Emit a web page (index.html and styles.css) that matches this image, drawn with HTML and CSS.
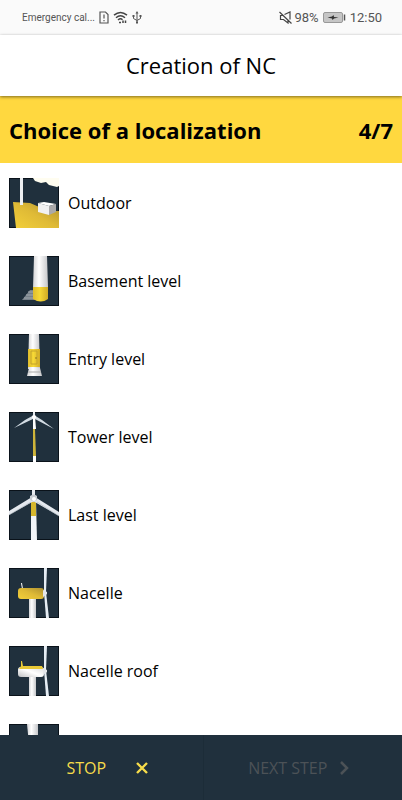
FILE: index.html
```html
<!DOCTYPE html>
<html lang="en">

<head>
    <meta charset="UTF-8">
    <meta name="viewport" content="width=device-width, initial-scale=1">
    <title>Creation of NC</title>
    <link rel="stylesheet" href="styles.css">
</head>

<body>
    <!-- shared gradients -->
    <svg class="defs" width="0" height="0" aria-hidden="true">
        <defs>
            <linearGradient id="tube">
                <stop offset="0" stop-color="#d4d4d6" />
                <stop offset="0.4" stop-color="#ffffff" />
                <stop offset="1" stop-color="#c6c7ca" />
            </linearGradient>
            <linearGradient id="gold">
                <stop offset="0" stop-color="#e0bd2c" />
                <stop offset="0.45" stop-color="#f7d936" />
                <stop offset="1" stop-color="#d0aa25" />
            </linearGradient>
            <linearGradient id="ground" x1="0" y1="1" x2="1" y2="0">
                <stop offset="0" stop-color="#f3d03a" />
                <stop offset="0.5" stop-color="#dfba36" />
                <stop offset="1" stop-color="#ad9030" />
            </linearGradient>
            <linearGradient id="shell" x1="0" y1="1" x2="1" y2="0">
                <stop offset="0" stop-color="#bfc0c2" />
                <stop offset="0.5" stop-color="#ffffff" />
                <stop offset="1" stop-color="#d9dadc" />
            </linearGradient>
        </defs>
    </svg>

    <div class="status-bar">
        <div class="status-group">
            <span class="carrier">Emergency cal...</span>
            <svg width="10" height="13" viewBox="0 0 10 13" fill="none" stroke="#555" stroke-width="1.2">
                <path d="M1 1h5.5L9 3.5V12H1z" />
                <path d="M5 3.5v4M5 9v1.3" />
            </svg>
            <svg width="15" height="13" viewBox="0 0 15 13" fill="none" stroke="#444" stroke-width="1.5">
                <path d="M1 4.2Q7.5-1.2 14 4.2M3 6.7Q7.5 2.8 12 6.7M5 9Q7.5 6.8 9.5 8.7" />
                <path d="M6 11.5h2M10 9.5V12M12.5 9.5V12" />
            </svg>
            <svg width="10" height="13" viewBox="0 0 10 13" fill="none" stroke="#555">
                <path d="M5 2v9M1.5 5v2.5L5 9.5l3.5-2V5" />
                <path d="M5 0l1.5 2.5h-3zM.5 4h2v2h-2zM7.5 4h2v2h-2zM4 10.5h2v2H4z" fill="#555" stroke="none" />
            </svg>
        </div>
        <div class="status-group status-right">
            <svg width="13" height="13" viewBox="0 0 13 13" fill="none" stroke="#444" stroke-width="1.2">
                <path d="M4 4.5H1.5v4h3L9 12V9.5M5.500 3.500L11 1v7.500M.5 1l12 11.500" />
            </svg>
            <span>98%</span>
            <svg class="battery" width="23" height="11" viewBox="0 0 23 11">
                <rect x=".5" y=".5" width="19" height="10" rx="1.5" fill="#c6c6c6" stroke="#999" />
                <path d="M4.5 5.5L9 4.5 10.5 3l.5 2 4.5.5-4.5 1L9.500 8 9 6.500z" fill="#333" />
                <path d="M21.5 2.5v6" stroke="#555" stroke-width="1.5" />
            </svg>
            <span>12:50</span>
        </div>
    </div>

    <header class="app-bar">
        <h1>Creation of NC</h1>
    </header>

    <div class="step-banner">
        <h2>Choice of a localization</h2>
        <span>4/7</span>
    </div>

    <ul class="locations">
        <li>
            <button class="location">
                <svg class="thumb" viewBox="0 0 50 50">
                    <path d="M24 0l2 3 6 2 5-1 3 3 8 2 2-1V0z" fill="#fffdf0" />
                    <path d="M4 24l17 1 7 3 11 5 11 0v17H7z" fill="url(#ground)" />
                    <path d="M11 0h3v27h-3z" fill="#eef0f3" />
                    <path d="M29 25l6-1 12 2-7 2z" fill="#fff" />
                    <path d="M29 25l11 3v9l-11-3z" fill="#f1f1f1" />
                    <path d="M40 28l7-2v8l-7 3z" fill="#aaa9aa" />
                </svg>
                Outdoor
            </button>
        </li>
        <li>
            <button class="location">
                <svg class="thumb" viewBox="0 0 50 50">
                    <path d="M13 44l8-10h5v10z" fill="#77818a" />
                    <path d="M19 36h6M17 39h8M15 42h10" stroke="#a0a6ac" />
                    <path d="M25 0h13l1 32H24z" fill="url(#tube)" />
                    <path d="M24 31h15v12q-7 5-15 0z" fill="url(#gold)" />
                </svg>
                Basement level
            </button>
        </li>
        <li>
            <button class="location">
                <svg class="thumb" viewBox="0 0 50 50">
                    <path d="M20 0h10l1 35H19z" fill="url(#tube)" />
                    <path d="M19 15h12v18H19z" fill="url(#gold)" />
                    <path d="M22 17h6v13h-6z" fill="none" stroke="#c4a32c" />
                    <path d="M27 23v2" stroke="#8a7426" />
                    <path d="M20 34h11l1 4 1 4H18l1-4z" fill="url(#tube)" />
                    <path d="M19 38h13" stroke="#aaa" />
                </svg>
                Entry level
            </button>
        </li>
        <li>
            <button class="location">
                <svg class="thumb" viewBox="0 0 50 50">
                    <path d="M24 0h2v5h-2z" fill="#e8ebef" />
                    <path d="M24 4h2l1 13h-3z" fill="#fff" />
                    <path d="M25 3l1 3L5 16l11-8zM25 3l-1 3 21 11-12-9z" fill="#d3dce4" />
                    <path d="M24 17h2l1 27h-3z" fill="#ceb43a" />
                    <path d="M24 44h3v6h-3z" fill="#fff" />
                    <circle cx="25" cy="5" r="2" fill="#fff" />
                </svg>
                Tower level
            </button>
        </li>
        <li>
            <button class="location">
                <svg class="thumb" viewBox="0 0 50 50">
                    <path d="M23 0h3v9h-3z" fill="#e8ebef" />
                    <path d="M22 11h5l1 39h-6z" fill="#f2f5f9" />
                    <path d="M22 12h5v14h-5z" fill="#d6b72d" />
                    <path d="M23 7l2 4L0 25v-4zM26 7l-2 4 26 15v-4z" fill="#e4e8ee" />
                    <path d="M0 25l22-13M28 12l22 14" stroke="#aeb8c0" stroke-width=".6" />
                    <path d="M21 6q4-3 7 0v4l-3 2-4-2z" fill="#c9cdd1" />
                    <circle cx="25" cy="9" r="2" fill="#fff" />
                </svg>
                Last level
            </button>
        </li>
        <li>
            <button class="location">
                <svg class="thumb" viewBox="0 0 50 50">
                    <path d="M20 28h7v22h-7z" fill="url(#tube)" />
                    <path d="M35 0h3l-1 24h-2z" fill="#e6edf4" />
                    <path d="M35 24h2l3 26h-3z" fill="#e6edf4" />
                    <path d="M12 15h1l1 6h-1z" fill="#fff" />
                    <rect x="9" y="20" width="26" height="11" rx="3" fill="url(#ground)" />
                    <path d="M34 22l4 2v2l-4 3z" fill="#e4e6ea" />
                </svg>
                Nacelle
            </button>
        </li>
        <li>
            <button class="location">
                <svg class="thumb" viewBox="0 0 50 50">
                    <path d="M20 28h7v22h-7z" fill="url(#tube)" />
                    <path d="M35 0h3l-1 24h-2z" fill="#e6edf4" />
                    <path d="M35 24h2l3 26h-3z" fill="#e6edf4" />
                    <rect x="9" y="21" width="26" height="10" rx="3" fill="url(#shell)" />
                    <path d="M12 15h1l1 5h19l1 3H10l2-3z" fill="#e9c936" />
                    <path d="M34 22l4 2v2l-4 3z" fill="#e4e6ea" />
                </svg>
                Nacelle roof
            </button>
        </li>
        <li>
            <button class="location" aria-label="Blade">
                <svg class="thumb" viewBox="0 0 50 50">
                    <path d="M18 0h11v50h-6z" fill="url(#tube)" />
                </svg>
            </button>
        </li>
    </ul>

    <footer class="actions">
        <button class="action stop">
            STOP
            <svg width="12" height="12" viewBox="0 0 12 12" fill="none" stroke="currentColor" stroke-width="2.4">
                <path d="M1 1l10 10M11 1L1 11" />
            </svg>
        </button>
        <button class="action next" disabled>
            NEXT STEP
            <svg width="9" height="14" viewBox="0 0 9 14" fill="none" stroke="currentColor" stroke-width="2.5">
                <path d="M1 1l6 6-6 6" />
            </svg>
        </button>
    </footer>
</body>

</html>
```
FILE: styles.css
```css
* {
    box-sizing: border-box;
}

body {
    margin: 0;
    height: 100vh;
    display: flex;
    flex-direction: column;
    font-family: "Open Sans", "Noto Sans", sans-serif;
    color: #000;
    background: #fff;
}

button {
    border: none;
    background: none;
    padding: 0;
    font: inherit;
    color: inherit;
    cursor: pointer;
}

svg {
    flex: none;
}

.defs {
    position: absolute;
}

.status-bar {
    flex: none;
    height: 35px;
    padding: 0 20px 0 22px;
    display: flex;
    align-items: center;
    justify-content: space-between;
    background: #fafafa;
    font-family: Roboto, sans-serif;
    color: #555;
}

.status-group {
    display: flex;
    align-items: center;
    gap: 4px;
}

.carrier {
    font-size: 10px;
}

.status-right {
    gap: 2px;
    font-size: 13px;
}

.battery {
    margin: 0 2px;
}

.app-bar {
    flex: none;
    height: 61px;
    padding-bottom: 2px;
    display: flex;
    align-items: center;
    justify-content: center;
    box-shadow: 0 1px 3px rgba(0, 0, 0, 0.5);
    z-index: 1;
}

.app-bar h1 {
    margin: 0;
    font-size: 22px;
    font-weight: 400;
}

.step-banner {
    flex: none;
    height: 67px;
    padding: 0 9px;
    display: flex;
    align-items: center;
    justify-content: space-between;
    background: #ffd83f;
    font-size: 22px;
    font-weight: 700;
}

.step-banner h2 {
    margin: 0;
    font-size: inherit;
}

.locations {
    flex: 1;
    min-height: 0;
    margin: 0;
    padding: 15px 9px 0;
    display: flex;
    flex-direction: column;
    gap: 28px;
    list-style: none;
    overflow-y: auto;
    scrollbar-width: none;
}

.location {
    width: 100%;
    display: flex;
    align-items: center;
    gap: 9px;
    font-size: 16px;
    text-align: left;
}

.thumb {
    width: 50px;
    height: 50px;
    background: #20303d;
    box-shadow: inset 0 0 0 1px #0a121a;
}

.actions {
    flex: none;
    height: 65px;
    display: flex;
    background: #20303d;
}

.action {
    flex: 1;
    display: flex;
    align-items: center;
    justify-content: center;
    font-size: 16px;
}

.stop {
    gap: 30px;
    padding-left: 12px;
    color: #f7dc4a;
    border-right: 1px solid #1c2c38;
}

.next {
    gap: 13px;
    padding-right: 8px;
    color: #4c5257;
    cursor: default;
}
```
